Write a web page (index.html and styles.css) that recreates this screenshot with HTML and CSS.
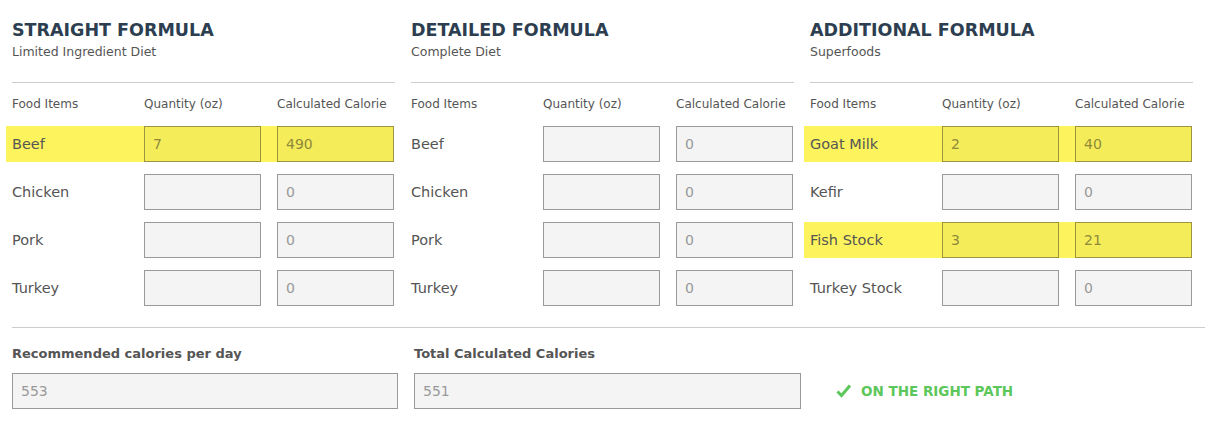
FILE: index.html
```html
<!DOCTYPE html>
<html lang="en">

<head>
  <meta charset="UTF-8">
  <meta name="viewport" content="width=device-width, initial-scale=1.0">
  <title>Calorie Calculator</title>
  <link rel="stylesheet" href="styles.css">
</head>

<body>
  <div class="calc">
    <div class="formulas">
      <div class="formula">
        <h2>STRAIGHT FORMULA</h2>
        <p class="sub">Limited Ingredient Diet</p>
        <div class="grid">
          <div class="head">Food Items</div>
          <div class="head">Quantity (oz)</div>
          <div class="head">Calculated Calorie</div>
          <div class="row active">
            <span class="food">Beef</span>
            <input class="field" type="text" value="7">
            <input class="field" type="text" value="490" readonly>
          </div>
          <div class="row">
            <span class="food">Chicken</span>
            <input class="field" type="text" value="">
            <input class="field" type="text" value="0" readonly>
          </div>
          <div class="row">
            <span class="food">Pork</span>
            <input class="field" type="text" value="">
            <input class="field" type="text" value="0" readonly>
          </div>
          <div class="row">
            <span class="food">Turkey</span>
            <input class="field" type="text" value="">
            <input class="field" type="text" value="0" readonly>
          </div>
        </div>
      </div>

      <div class="formula">
        <h2>DETAILED FORMULA</h2>
        <p class="sub">Complete Diet</p>
        <div class="grid">
          <div class="head">Food Items</div>
          <div class="head">Quantity (oz)</div>
          <div class="head">Calculated Calorie</div>
          <div class="row">
            <span class="food">Beef</span>
            <input class="field" type="text" value="">
            <input class="field" type="text" value="0" readonly>
          </div>
          <div class="row">
            <span class="food">Chicken</span>
            <input class="field" type="text" value="">
            <input class="field" type="text" value="0" readonly>
          </div>
          <div class="row">
            <span class="food">Pork</span>
            <input class="field" type="text" value="">
            <input class="field" type="text" value="0" readonly>
          </div>
          <div class="row">
            <span class="food">Turkey</span>
            <input class="field" type="text" value="">
            <input class="field" type="text" value="0" readonly>
          </div>
        </div>
      </div>

      <div class="formula">
        <h2>ADDITIONAL FORMULA</h2>
        <p class="sub">Superfoods</p>
        <div class="grid">
          <div class="head">Food Items</div>
          <div class="head">Quantity (oz)</div>
          <div class="head">Calculated Calorie</div>
          <div class="row active">
            <span class="food">Goat Milk</span>
            <input class="field" type="text" value="2">
            <input class="field" type="text" value="40" readonly>
          </div>
          <div class="row">
            <span class="food">Kefir</span>
            <input class="field" type="text" value="">
            <input class="field" type="text" value="0" readonly>
          </div>
          <div class="row active">
            <span class="food">Fish Stock</span>
            <input class="field" type="text" value="3">
            <input class="field" type="text" value="21" readonly>
          </div>
          <div class="row">
            <span class="food">Turkey Stock</span>
            <input class="field" type="text" value="">
            <input class="field" type="text" value="0" readonly>
          </div>
        </div>
      </div>
    </div>

    <div class="totals">
      <div class="total">
        <label>Recommended calories per day</label>
        <input class="field" type="text" value="553" readonly>
      </div>
      <div class="total">
        <label>Total Calculated Calories</label>
        <input class="field" type="text" value="551" readonly>
      </div>
      <div class="status">
        <svg width="16" height="14" viewBox="0 0 16 14">
          <path d="M1.5 7.5 L5.5 11.5 L14 1.5" fill="none" stroke="#5cc75a" stroke-width="3"/>
        </svg>
        ON THE RIGHT PATH
      </div>
    </div>
  </div>
</body>

</html>
```

FILE: styles.css
```css
* {
  margin: 0;
  padding: 0;
  box-sizing: border-box;
}

body {
  font-family: "DejaVu Sans", sans-serif;
  color: #555;
  background: #fff;
}

.calc {
  padding: 0 14px 0 12px;
}

.formulas {
  display: flex;
}

.formula {
  flex: 0 0 399px;
  padding-right: 16px;
}

h2 {
  margin-top: 19px;
  font-size: 17.5px;
  line-height: 22px;
  color: #2c3e50;
}

.sub {
  margin-top: 3px;
  font-size: 12.5px;
  line-height: 16px;
  color: #555;
  padding-bottom: 22px;
  border-bottom: 1px solid #ccc;
}

.grid {
  display: grid;
  grid-template-columns: 116px 117px 117px;
  column-gap: 16px;
  row-gap: 12px;
  padding-top: 13px;
}

.head {
  font-size: 12px;
  line-height: 16px;
  color: #555;
  margin-bottom: 2px;
}

.row {
  grid-column: 1 / -1;
  display: grid;
  grid-template-columns: subgrid;
  align-items: center;
  height: 36px;
}

.row.active {
  background: #fdf35c;
  margin-left: -6px;
  padding-left: 6px;
}

.food {
  font-size: 14.5px;
  color: #555;
  white-space: nowrap;
}

.field {
  height: 36px;
  width: 100%;
  border: 1px solid #999;
  background: #f4f4f4;
  padding: 0 8px;
  font-family: "DejaVu Sans", sans-serif;
  font-size: 14px;
  color: #999;
  outline: none;
}

.active .field {
  background: #f5ec5a;
  border-color: #9b9540;
  color: #8f8a3a;
}

.totals {
  margin-top: 21px;
  border-top: 1px solid #ccc;
  display: grid;
  grid-template-columns: 386px 387px 1fr;
  column-gap: 16px;
  padding-top: 17px;
}

.total label {
  display: block;
  font-size: 13px;
  font-weight: bold;
  line-height: 18px;
  color: #555;
  margin-bottom: 10px;
}

.status {
  display: flex;
  align-items: center;
  gap: 9px;
  padding-left: 19px;
  padding-top: 28px;
  font-size: 13.5px;
  font-weight: bold;
  color: #5cc75a;
}
```
